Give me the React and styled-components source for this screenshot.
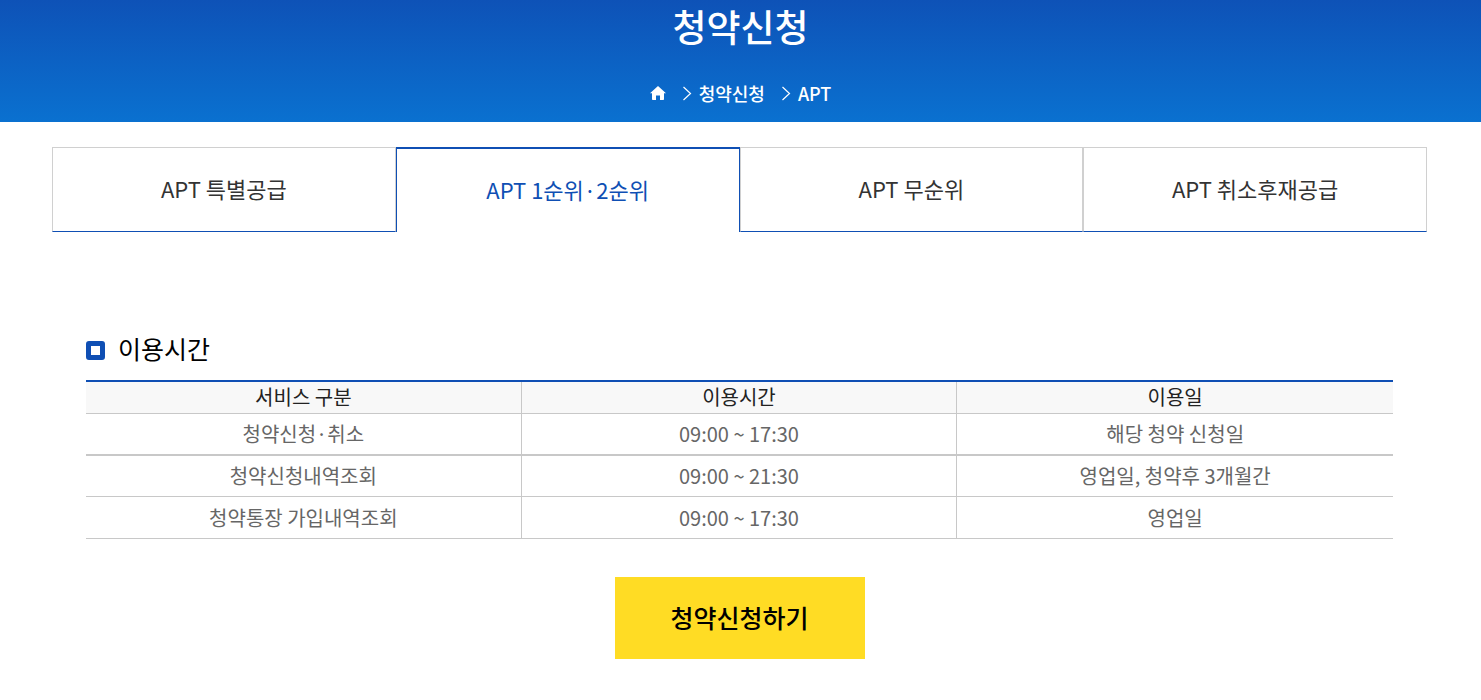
import React from "react";
import styled, { createGlobalStyle } from "styled-components";

const GlobalStyle = createGlobalStyle`
  *, *::before, *::after { box-sizing: border-box; }
  body {
    margin: 0;
    background: #fff;
    color: #000;
    font-family: "Noto Sans CJK KR", "Noto Sans", sans-serif;
  }
`;

const Hero = styled.header`
  display: flex;
  flex-direction: column;
  align-items: center;
  height: 122px;
  color: #fff;
  background: linear-gradient(#0e52b7, #0a71d0);
`;

const Title = styled.h1`
  margin: 0;
  font-size: 37px;
  line-height: 52px;
  font-weight: 500;
`;

const Crumbs = styled.ol`
  display: flex;
  align-items: center;
  margin: 28px 0 0;
  padding: 0;
  list-style: none;
  font-size: 18px;
  line-height: 26px;
  font-weight: 500;
`;

const Crumb = styled.li`
  display: flex;
  align-items: center;
  gap: 7px;

  & + & { margin-left: 16px; }
`;

const CrumbLink = styled.a`
  display: flex;
  color: inherit;
  text-decoration: none;
`;

const Content = styled.main`
  padding: 25px 54px 40px 52px;
`;

const Tabs = styled.nav`
  display: grid;
  grid-template-columns: repeat(4, 1fr);
`;

const Tab = styled.a`
  display: flex;
  align-items: center;
  justify-content: center;
  height: 85px;
  padding-bottom: 4px;
  border: 1px solid ${(p) => (p.$active ? "#0f4fb4" : "#d0d0d0")};
  border-top-width: ${(p) => (p.$active ? 2 : 1)}px;
  border-bottom: ${(p) => (p.$active ? "0" : "1px solid #0f4fb4")};
  color: ${(p) => (p.$active ? "#0f4fb4" : "#333")};
  font-size: 22px;
  line-height: 32px;
  text-decoration: none;
`;

const Section = styled.section`
  padding: 98px 34px 0;
`;

const Heading = styled.h2`
  display: flex;
  align-items: center;
  gap: 13px;
  margin: 0 0 10px;
  font-size: 25px;
  line-height: 36px;
  font-weight: 400;

  &::before {
    content: "";
    width: 19px;
    height: 19px;
    margin-top: 4px;
    border: 5px solid #0f4fb4;
    border-radius: 3px;
  }
`;

const HoursTable = styled.table`
  width: 100%;
  margin-top: 14px;
  table-layout: fixed;
  border-collapse: separate;
  border-spacing: 0;
  border-top: 2px solid #0f4fb4;
  font-size: 20px;
  line-height: 30px;
  text-align: center;
`;

const HeadCell = styled.th`
  padding: 0 0 1px;
  border-bottom: 1px solid #c8c8c8;
  background: #f8f8f8;
  color: #222;
  font-weight: 400;

  &:not(:last-child) { border-right: 1px solid #c8c8c8; }
`;

const Cell = styled.td`
  padding: 5px 0;
  border-bottom: ${(p) => (p.$thick ? 2 : 1)}px solid #c8c8c8;
  color: #666;

  &:not(:last-child) { border-right: 1px solid #c8c8c8; }
  tr:last-child > & { padding-top: 6px; }
`;

const Actions = styled.div`
  display: flex;
  justify-content: center;
  margin-top: 38px;
`;

const ApplyButton = styled.button`
  width: 250px;
  height: 82px;
  padding: 0 0 2px;
  border: 0;
  background: #ffdc24;
  color: #000;
  font-family: inherit;
  font-size: 25px;
  font-weight: 500;
  cursor: pointer;
`;

function HomeIcon() {
  return (
    <svg width="16" height="14" viewBox="0 0 16 14" fill="#fff" aria-hidden="true">
      <path d="M8 0 16 7.2H14V13.2Q14 14 13.2 14H10V9.4H6V14H2.8Q2 14 2 13.2V7.2H0Z" />
    </svg>
  );
}

function Chevron() {
  return (
    <svg width="10" height="15" viewBox="0 0 10 15" fill="none" stroke="#fff" strokeWidth="1.2" aria-hidden="true">
      <path d="M1.5 1 8.5 7.5 1.5 14" />
    </svg>
  );
}

const tabs = ["APT 특별공급", "APT 1순위·2순위", "APT 무순위", "APT 취소후재공급"];
const columns = ["서비스 구분", "이용시간", "이용일"];
const rows = [
  ["청약신청·취소", "09:00 ~ 17:30", "해당 청약 신청일"],
  ["청약신청내역조회", "09:00 ~ 21:30", "영업일, 청약후 3개월간"],
  ["청약통장 가입내역조회", "09:00 ~ 17:30", "영업일"],
];

export default function App() {
  return (
    <>
      <GlobalStyle />
      <Hero>
        <Title>청약신청</Title>
        <nav>
          <Crumbs>
            <Crumb>
              <CrumbLink href="#home" aria-label="홈"><HomeIcon /></CrumbLink>
            </Crumb>
            <Crumb>
              <Chevron />
              <CrumbLink href="#apply">청약신청</CrumbLink>
            </Crumb>
            <Crumb>
              <Chevron />
              <CrumbLink href="#apt">APT</CrumbLink>
            </Crumb>
          </Crumbs>
        </nav>
      </Hero>
      <Content>
        <Tabs>
          {tabs.map((label, i) => (
            <Tab key={label} href={`#tab-${i}`} $active={i === 1} aria-current={i === 1 ? "page" : undefined}>
              {label}
            </Tab>
          ))}
        </Tabs>
        <Section>
          <Heading id="hours">이용시간</Heading>
          <HoursTable aria-labelledby="hours">
            <thead>
              <tr>
                {columns.map((c) => <HeadCell key={c} scope="col">{c}</HeadCell>)}
              </tr>
            </thead>
            <tbody>
              {rows.map((row, r) => (
                <tr key={row[0]}>
                  {row.map((text) => <Cell key={text} $thick={r === 0}>{text}</Cell>)}
                </tr>
              ))}
            </tbody>
          </HoursTable>
          <Actions>
            <ApplyButton type="button">청약신청하기</ApplyButton>
          </Actions>
        </Section>
      </Content>
    </>
  );
}
